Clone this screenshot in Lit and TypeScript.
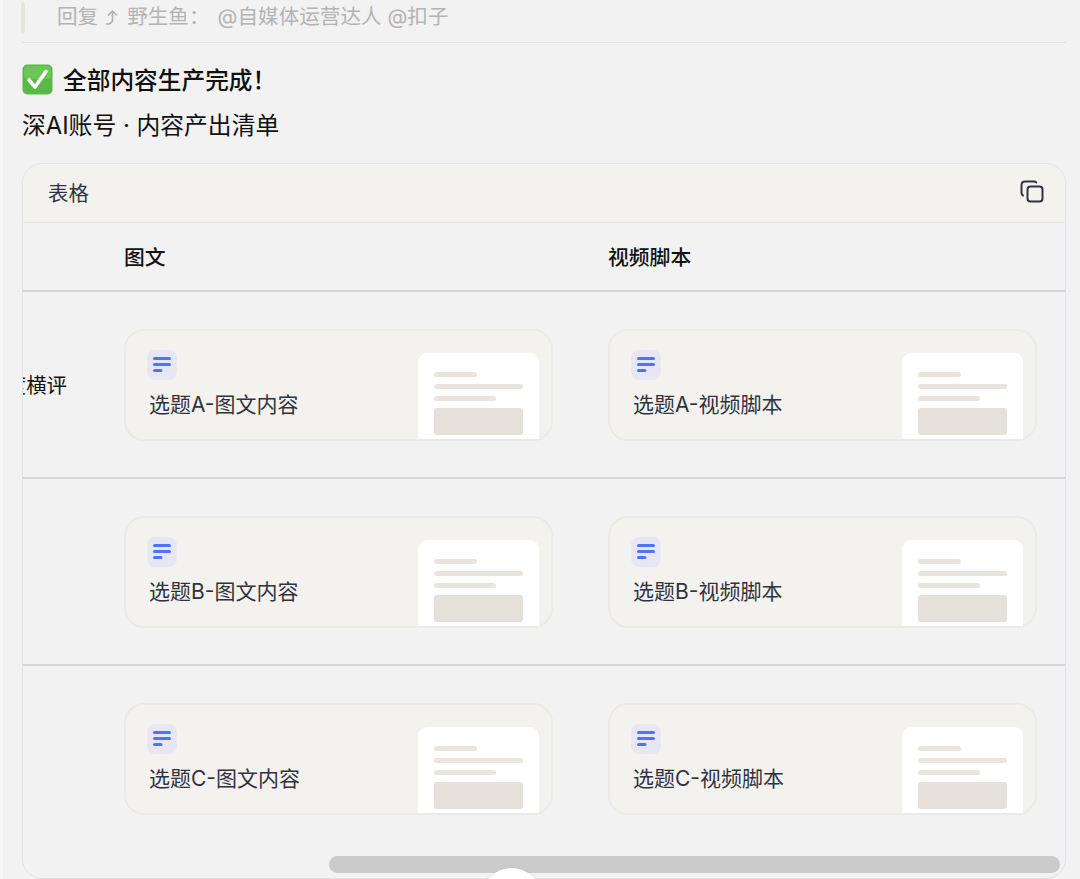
import { LitElement, html, css, svg } from "lit";
import { customElement } from "lit/decorators.js";

const FONT = css`Inter, "Noto Sans CJK SC", "Liberation Sans", sans-serif`;

@customElement("doc-card")
class DocCard extends LitElement {
  static properties = { label: { type: String } };
  label = "";
  static styles = css`
    :host { display: block; width: 429px; }
    .card { box-sizing: border-box; height: 112px; display: flex; justify-content: space-between; background: #f3f2ee; border: 2px solid #eaeae6; border-radius: 20px; padding: 19px 12px 0 21px; }
    .left { display: flex; flex-direction: column; align-items: flex-start; }
    .ic { width: 30px; height: 30px; border-radius: 8px; background: #e6e7f3; display: block; }
    .label { font: 400 21px/30px ${FONT}; color: #30323f; margin: 10px 0 0 2px; white-space: nowrap; }
    .thumb { box-sizing: border-box; align-self: flex-end; width: 121px; height: 86px; background: #fff; border-radius: 9px 9px 0 0; padding: 19px 16px 0; display: flex; flex-direction: column; gap: 7px; }
    .ln { height: 5px; border-radius: 3px; background: #e9e4de; }
    .l1 { width: 43px; } .l2 { width: 89px; } .l3 { width: 62px; }
    .blk { height: 27px; border-radius: 3px; background: #e6e0db; width: 89px; }
  `;
  render() {
    return html`<div class="card">
      <div class="left">
        <svg class="ic" viewBox="0 0 30 30" fill="none" stroke="#4f73fb" stroke-width="3" stroke-linecap="round">
          ${svg`<path d="M7.500 8.500h15M7.500 14.500h15M7.500 20.500h6.500"/>`}
        </svg>
        <div class="label">${this.label}</div>
      </div>
      <div class="thumb">
        <div class="ln l1"></div><div class="ln l2"></div><div class="ln l3"></div><div class="blk"></div>
      </div>
    </div>`;
  }
}

@customElement("app-root")
class AppRoot extends LitElement {
  static styles = css`
    :host { display: block; width: 1080px; height: 879px; overflow: hidden; background: #f8f8f8; font-family: ${FONT}; }
    .page { box-sizing: border-box; margin-left: 3px; height: 879px; background: #f2f2f2; padding: 0 14px 0 19px; position: relative; overflow: hidden; }
    .quote { display: flex; align-items: center; height: 42px; border-bottom: 1px solid #e4e4e4; box-sizing: content-box; }
    .bar { width: 4px; height: 31px; margin: -8px 32px 0 -1px; background: #e6e5dc; border-radius: 2px; }
    .qt { font-size: 20.6px; line-height: 34px; color: #b4b4b4; white-space: nowrap; display: flex; align-items: center; margin-top: -8px; }
    .qt svg { width: 16px; height: 18px; margin: 0 6px 0 7px; }
    .mentions { margin-left: 8px; }
    .title { display: flex; align-items: center; gap: 10px; margin-top: 20px; height: 32px; font-size: 23.7px; font-weight: 500; color: #111; }
    .title svg { width: 31px; height: 31px; flex: none; }
    .sub { font-size: 23.8px; line-height: 34px; color: #111; margin-top: 14px; }
    .table { box-sizing: border-box; position: relative; margin-top: 20px; height: 716px; border: 1px solid #e2e2ea; border-radius: 20px; overflow: hidden; }
    .thd { box-sizing: border-box; height: 59px; background: #f3f2ee; border-bottom: 1px solid #e8e7e3; display: flex; align-items: center; justify-content: space-between; padding: 0 21px 2px 25px; font-size: 20.4px; color: #30323f; }
    .thd svg { width: 24px; height: 24px; }
    .row { display: grid; grid-template-columns: 101px 484px 1fr; box-sizing: border-box; }
    .head { height: 69px; align-items: center; padding-bottom: 2px; border-bottom: 2px solid #d5d5d5; font-size: 20.8px; font-weight: 500; color: #111; }
    .body { height: 187px; padding-top: 37px; border-bottom: 2px solid #d5d5d5; }
    .body.last { border-bottom: 0; }
    .rl { display: flex; justify-content: flex-end; overflow: hidden; white-space: nowrap; padding-right: 57px; font-size: 20.4px; line-height: 30px; color: #111; margin-top: 42px; height: 30px; box-sizing: border-box; }
    .scroll { position: absolute; left: 306px; right: 5px; bottom: 5px; height: 17px; border-radius: 9px; background: #cbcbcb; }
    .fab { position: absolute; left: 478px; top: 868px; width: 61px; height: 61px; border-radius: 50%; background: #fff; box-shadow: 0 0 2px rgba(0,0,0,.12); }
  `;
  render() {
    const rows = [
      ["深度横评", "选题A-图文内容", "选题A-视频脚本"],
      ["", "选题B-图文内容", "选题B-视频脚本"],
      ["", "选题C-图文内容", "选题C-视频脚本"],
    ];
    return html`<div class="page">
      <div class="quote">
        <div class="bar"></div>
        <div class="qt">回复
          <svg viewBox="0 0 16 18" fill="none" stroke="#b0b0b0" stroke-width="1.600" stroke-linecap="round" stroke-linejoin="round"><path d="M1.500 16c3.500 0 5.500-.6 6-3.500V3.500M3.500 7l4-4 4 4"/></svg>
          野生鱼：<span class="mentions">@自媒体运营达人 @扣子</span></div>
      </div>
      <div class="title">
        <svg viewBox="0 0 31 31"><rect x="0.500" y="0.500" width="30" height="30" rx="5" fill="#58b947"/><rect x="2" y="2" width="27" height="13" rx="4" fill="#7ad064" opacity=".6"/><path d="M7 16l6 7L24 7.500" fill="none" stroke="#fff" stroke-width="3.600" stroke-linecap="round" stroke-linejoin="round"/></svg>
        <span>全部内容生产完成！</span>
      </div>
      <div class="sub">深AI账号 · 内容产出清单</div>
      <div class="table">
        <div class="thd"><span>表格</span>
          <svg viewBox="0 0 24 24" fill="none" stroke="#30323f" stroke-width="2" stroke-linecap="round" stroke-linejoin="round"><rect x="7.500" y="6.500" width="15" height="15" rx="3"/><path d="M3 15.500c-1-.5-1.500-1.200-1.500-2.500V5c0-2 1.500-3.500 3.500-3.500h9c1 0 1.800.3 2.300 1"/></svg>
        </div>
        <div class="row head"><span></span><span>图文</span><span>视频脚本</span></div>
        ${rows.map((r, i) => html`<div class="row body ${i === 2 ? "last" : ""}">
          <div class="rl">${r[0]}</div>
          <doc-card label=${r[1]}></doc-card>
          <doc-card label=${r[2]}></doc-card>
        </div>`)}
        <div class="scroll"></div>
      </div>
      <div class="fab"></div>
    </div>`;
  }
}
